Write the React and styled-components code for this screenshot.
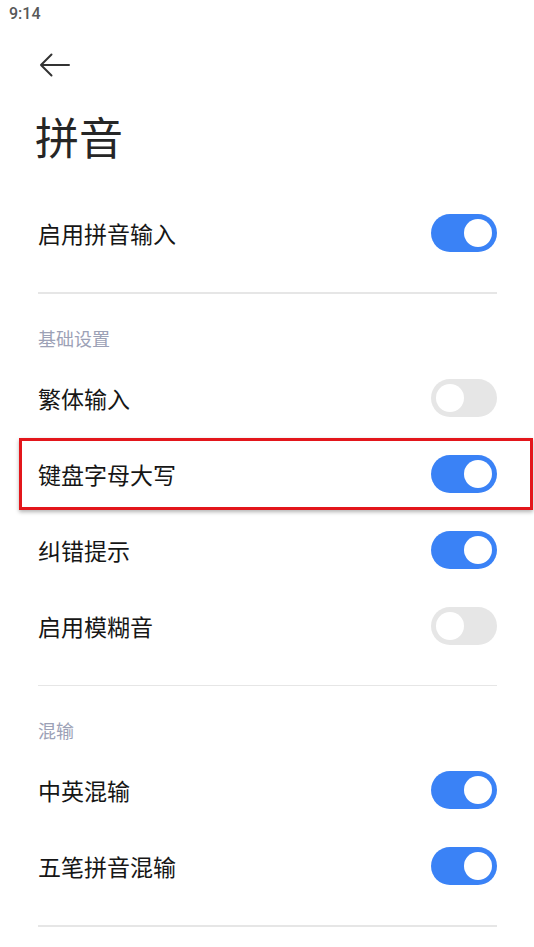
import React from "react";
import styled, { createGlobalStyle } from "styled-components";

const Global = createGlobalStyle`
  html, body { margin: 0; padding: 0; background: #fff; }
  body { font-family: "Noto Sans CJK SC", "Noto Sans", sans-serif; }
  * { box-sizing: border-box; }
`;

const Screen = styled.div`
  width: 534px;
  min-height: 947px;
  background: #fff;
`;

const StatusBar = styled.div`
  height: 30px;
  line-height: 27px;
  padding-left: 9px;
  font-family: Roboto, "Noto Sans", sans-serif;
  font-size: 16px;
  font-weight: 500;
  color: #585858;
`;

const Content = styled.div`
  padding: 0 37px 0 38px;
`;

const BackBar = styled.div`
  height: 70px;
  display: flex;
  align-items: center;
`;

const BackButton = styled.button`
  border: 0;
  padding: 0;
  background: none;
  display: flex;
  width: 32px;
  height: 24px;
  margin-left: 1px;
`;

const Title = styled.h1`
  margin: 8px 0 0 -3px;
  height: 56px;
  line-height: 56px;
  font-size: 44px;
  font-weight: 400;
  color: #262626;
`;

const List = styled.div`
  margin-top: 31px;
`;

const Row = styled.div`
  position: relative;
  height: 76px;
  display: flex;
  align-items: center;
  justify-content: space-between;
`;

const Label = styled.span`
  font-size: 23px;
  color: #161616;
`;

const Highlight = styled.div`
  position: absolute;
  left: -19px;
  right: -36px;
  top: 2px;
  bottom: 2px;
  border: 3px solid #e3161b;
  box-shadow: 0 2px 4px rgba(0, 0, 0, 0.3);
  pointer-events: none;
`;

const Divider = styled.div`
  height: 1.5px;
  background: #e6e6e6;
  margin-top: 21px;
`;

const SectionTitle = styled.div`
  padding: 32px 0 10px;
  line-height: 24px;
  font-size: 18px;
  color: #9ca1b6;
`;

const Track = styled.button`
  position: relative;
  width: 66px;
  height: 38px;
  border: 0;
  padding: 0;
  border-radius: 19px;
  background: ${(p) => (p.$on ? "#3a82f6" : "#e6e6e6")};
  flex-shrink: 0;
`;

const Knob = styled.span`
  position: absolute;
  top: 5px;
  left: ${(p) => (p.$on ? "33px" : "5px")};
  width: 28px;
  height: 28px;
  border-radius: 50%;
  background: #fff;
`;

const Toggle = ({ on }) => (
  <Track $on={on} aria-pressed={on}>
    <Knob $on={on} />
  </Track>
);

const Setting = ({ label, on, highlighted }) => (
  <Row>
    <Label>{label}</Label>
    <Toggle on={on} />
    {highlighted && <Highlight />}
  </Row>
);

export default function App() {
  return (
    <Screen>
      <Global />
      <StatusBar>9:14</StatusBar>
      <Content>
        <BackBar>
          <BackButton aria-label="back">
            <svg width="32" height="24" viewBox="0 0 32 24" fill="none">
              <path
                d="M30 12H2M12.5 1.5L2 12l10.5 10.5"
                stroke="#333"
                strokeWidth="2"
                strokeLinecap="round"
                strokeLinejoin="round"
              />
            </svg>
          </BackButton>
        </BackBar>
        <Title>拼音</Title>
        <List>
          <Setting label="启用拼音输入" on />
          <Divider />
          <SectionTitle>基础设置</SectionTitle>
          <Setting label="繁体输入" on={false} />
          <Setting label="键盘字母大写" on highlighted />
          <Setting label="纠错提示" on />
          <Setting label="启用模糊音" on={false} />
          <Divider />
          <SectionTitle>混输</SectionTitle>
          <Setting label="中英混输" on />
          <Setting label="五笔拼音混输" on />
          <Divider />
        </List>
      </Content>
    </Screen>
  );
}
